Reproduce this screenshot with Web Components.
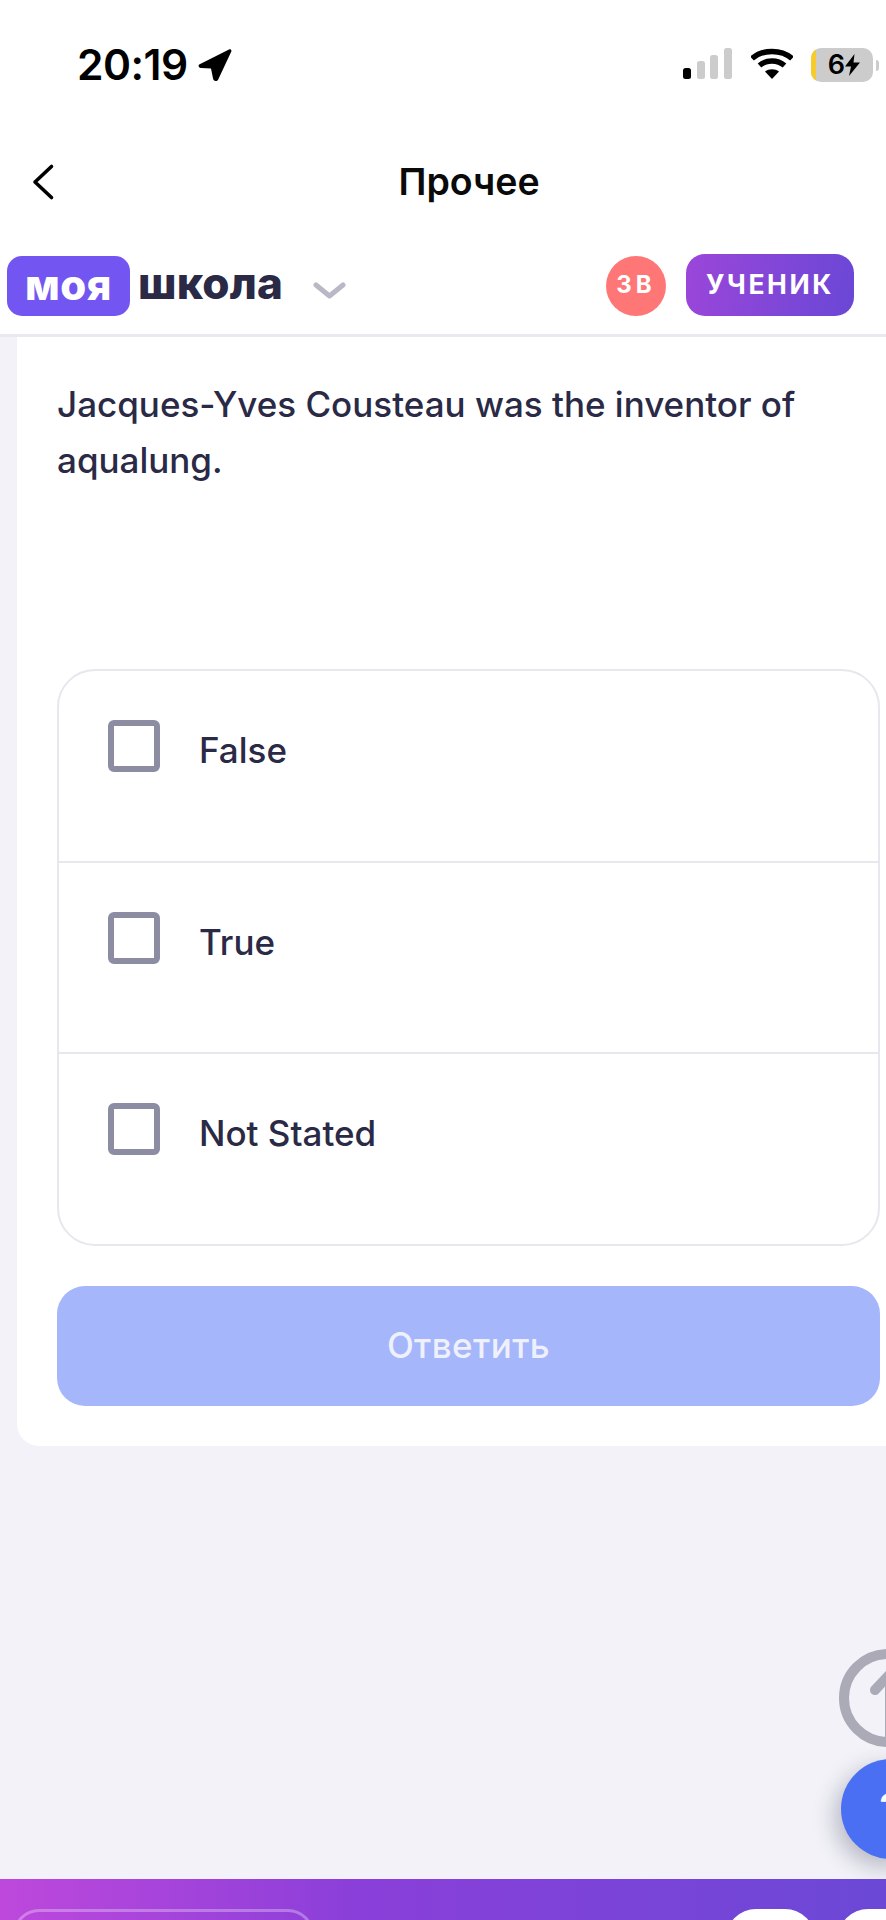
<!DOCTYPE html>
<html lang="ru">
<head>
<meta charset="utf-8">
<style>
html,body{margin:0;padding:0;height:100%;}
body{width:886px;height:1920px;overflow:hidden;background:#f2f2f8;font-family:Inter,"Liberation Sans",sans-serif;}
app-page{height:1920px;}
</style>
</head>
<body>
<app-page>
  <status-bar></status-bar>
  <nav-bar title="Прочее"></nav-bar>
  <school-header></school-header>
  <question-card text="Jacques-Yves Cousteau was the inventor of aqualung.">
    <option-row label="False"></option-row>
    <option-row label="True"></option-row>
    <option-row label="Not Stated"></option-row>
  </question-card>
  <fab-buttons></fab-buttons>
  <bottom-bar></bottom-bar>
</app-page>
<script>
function def(name, html){
  customElements.define(name, class extends HTMLElement{
    connectedCallback(){
      if(this.shadowRoot) return;
      const r=this.attachShadow({mode:'open'});
      r.innerHTML=typeof html==='function'?html(this):html;
    }
  });
}
def('app-page',`<style>:host{display:flex;flex-direction:column;width:886px;position:relative;overflow:hidden}</style><slot></slot>`);

def('status-bar',`<style>
:host{display:flex;box-sizing:border-box;height:136px;background:#fff;padding:43px 0 0 77px;justify-content:space-between;align-items:flex-start;color:#000;flex:none}
.l{display:flex;align-items:center;gap:10px}
.t{font:600 42.500px/44px Inter,"Liberation Sans",sans-serif;letter-spacing:-.5px;height:44px}
.r{display:flex;align-items:flex-start;gap:18px;padding:5px 7px 0 0}
svg{display:block}
.bat{position:relative;width:62px;height:34px;border-radius:10px;background:#ccc;overflow:hidden;display:flex;align-items:center;justify-content:center;font:600 27px/34px Inter,"Liberation Sans",sans-serif;padding-left:4px;box-sizing:border-box}
.bat:before{content:"";position:absolute;left:0;top:0;bottom:0;width:5px;background:#f7cb2e}
.batw{display:flex;align-items:center;gap:3px}
.nub{width:3px;height:11px;background:#ccc;border-radius:0 3px 3px 0}
</style>
<div class="l"><span class="t">20:19</span><svg width="34" height="33" viewBox="0 0 34 33"><path d="M1.200 15.500 31 .6c1.600-.8 3 .6 2.200 2.200L20.200 30.400c-1.200 2.400-4.500 2-5.100-.6L13 19.500 3 18.900C.5 18.700 0 16.300 1.200 15.500Z" fill="#000"/></svg></div>
<div class="r">
<svg width="50" height="32" viewBox="0 0 50 32"><rect x="0" y="20" width="8" height="11" rx="2.500" fill="#000"/><rect x="14" y="13" width="8" height="18" rx="2.500" fill="#ccc"/><rect x="27" y="7" width="8" height="24" rx="2.500" fill="#ccc"/><rect x="41" y="0" width="8" height="31" rx="2.500" fill="#ccc"/></svg>
<svg width="42" height="32" viewBox="0 0 42 32"><path d="M1 10.500C11.500 1 30.500 1 41 10.500" stroke="#000" stroke-width="5.500" fill="none"/><path d="M8.500 17.500C15.500 11.500 26.500 11.500 33.500 17.500" stroke="#000" stroke-width="5.500" fill="none"/><path d="M21 31 14 23.500C18 20.500 24 20.500 28 23.500Z" fill="#000"/></svg>
<div class="batw"><div class="bat"><span>6</span><svg width="15" height="22" viewBox="0 0 15 22"><path d="M9.500 0 0 12.500h6L4 22 15 8.500H8.500Z" fill="#000"/></svg></div><div class="nub"></div></div>
</div>`);

def('nav-bar',el=>`<style>
:host{display:flex;box-sizing:border-box;height:110px;background:#fff;position:relative;align-items:flex-start;justify-content:center;padding:25px 0 0 52px;flex:none}
.t{font:600 37.500px/42px Inter,"Liberation Sans",sans-serif;color:#0a0a0a}
svg{position:absolute;left:31px;top:27px}
</style><svg width="24" height="38" viewBox="0 0 24 38"><path d="M20.500 3.500 4 19l16.500 15.500" stroke="#000" stroke-width="3.600" stroke-linecap="round" stroke-linejoin="round" fill="none"/></svg><span class="t">${el.getAttribute('title')}</span>`);

def('school-header',`<style>
:host{display:flex;box-sizing:border-box;height:91px;background:#fff;border-bottom:3px solid #e9e9ef;align-items:flex-start;justify-content:space-between;padding:10px 32px 0 7px;flex:none}
.l{display:flex;align-items:flex-start}
.moya{box-sizing:border-box;width:123px;height:60px;background:#7356f1;border-radius:15px;color:#fff;font:800 42px/57px Inter,"Liberation Sans",sans-serif;text-align:center;letter-spacing:.5px}
.shk{font:800 44px/54px Inter,"Liberation Sans",sans-serif;color:#2a2a46;margin-left:8px;letter-spacing:.2px}
.chev{margin:26px 0 0 30px}
.r{display:flex;align-items:flex-start;gap:20px}
.av{width:60px;height:60px;border-radius:50%;background:#ff7676;color:#fff;font:700 24px/58px Inter,"Liberation Sans",sans-serif;text-align:center;letter-spacing:4px}
.role{width:168px;height:62px;box-sizing:border-box;border-radius:19px;background:linear-gradient(100deg,#9b46d9,#6a47d6);color:#fff;font:700 26.500px/60px Inter,"Liberation Sans",sans-serif;text-align:center;letter-spacing:2.600px;margin-top:-2px}
</style>
<div class="l"><span class="moya">моя</span><span class="shk">школа</span><svg class="chev" width="33" height="18" viewBox="0 0 33 18"><path d="M3 3 16.500 14 30 3" stroke="#b9b9c6" stroke-width="5" stroke-linecap="round" stroke-linejoin="round" fill="none"/></svg></div>
<div class="r"><div class="av">ЗВ</div><div class="role">УЧЕНИК</div></div>`);

def('question-card',el=>`<style>
:host{display:block;box-sizing:border-box;margin-left:17px;width:869px;height:1109px;background:#fff;border-radius:0 0 0 22px;padding:39px 6px 0 40px;flex:none}
.q{font:500 35px/56px Inter,"Liberation Sans",sans-serif;color:#2a2a46;width:800px;height:293px}
.box{box-sizing:border-box;height:577px;border:2.500px solid #e7e7ee;border-radius:38px;overflow:hidden}
.btn{box-sizing:border-box;height:120px;margin-top:40px;background:#a5b6fa;border-radius:28px;color:#eef0fb;font:500 35px/118px Inter,"Liberation Sans",sans-serif;text-align:center;letter-spacing:.4px}
</style><div class="q">${el.getAttribute('text')}</div><div class="box"><slot></slot></div><div class="btn">Ответить</div>`);

def('option-row',el=>`<style>
:host{display:flex;box-sizing:border-box;height:191.500px;border-bottom:2.500px solid #e7e7ee;padding:49px 0 0 49px;align-items:flex-start;gap:39px}
:host(:last-child){border-bottom:0}
.c{box-sizing:border-box;width:52px;height:52px;border:6.500px solid #8c8ca3;border-radius:6px;flex:none}
.t{font:500 35px/50px Inter,"Liberation Sans",sans-serif;color:#2a2a46;padding-top:5px}
</style><div class="c"></div><div class="t">${el.getAttribute('label')}</div>`);

def('fab-buttons',`<style>
:host{display:block;position:absolute;left:0;top:0;width:886px;height:1920px;pointer-events:none}
.up{position:absolute;left:839px;top:1649px;width:98px;height:98px;box-sizing:border-box;border:10px solid #ababb8;border-radius:50%}
.ar{position:absolute;left:0;top:0;overflow:visible}
.help{position:absolute;left:841px;top:1759px;width:100px;height:100px;border-radius:50%;background:#4a6ff3;box-shadow:-6px 8px 22px rgba(40,40,70,.28);color:#fff;font:700 42px/100px Inter,"Liberation Sans",sans-serif;text-align:center}
</style><div class="up"></div><svg class="ar" width="886" height="1920" viewBox="0 0 886 1920"><path d="M875 1690 890 1674M890 1674V1740" stroke="#ababb8" stroke-width="10" stroke-linecap="round" fill="none"/></svg><div class="help">?</div>`);

def('bottom-bar',`<style>
:host{display:block;position:absolute;left:0;top:1879px;width:886px;height:41px;overflow:hidden;background:linear-gradient(90deg,#be48dc 0%,#8a3fd9 40%,#6b48d6 100%)}
.f{position:absolute;left:13px;top:30px;width:301px;height:60px;box-sizing:border-box;border:3px solid rgba(255,255,255,.3);border-radius:26px}
.p{position:absolute;top:30px;height:60px;background:#fff;border-radius:30px}
</style><div class="f"></div><div class="p" style="left:726px;width:89px"></div><div class="p" style="left:838px;width:89px"></div>`);
</script>
</body>
</html>
